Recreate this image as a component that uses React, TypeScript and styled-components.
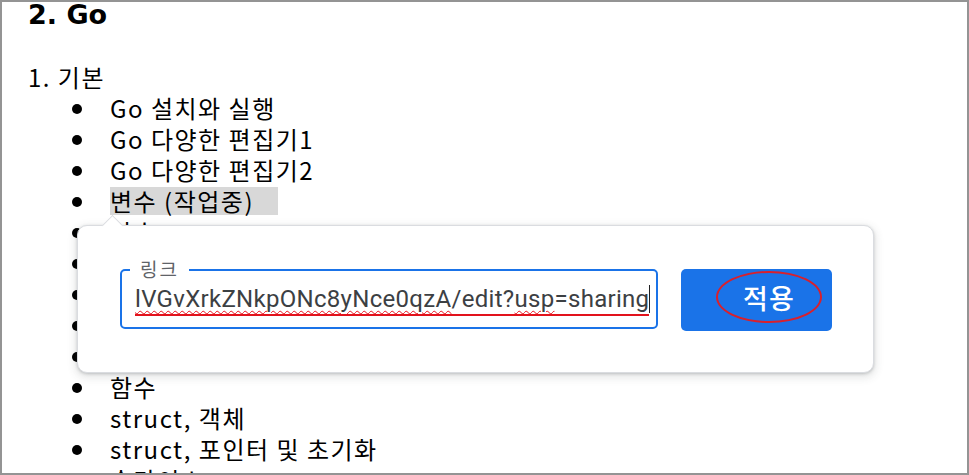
import React from 'react';
import styled, { createGlobalStyle } from 'styled-components';

const GlobalStyle = createGlobalStyle`
  html, body {
    margin: 0;
    padding: 0;
    background: #ffffff;
  }
  body {
    font-family: "Noto Sans CJK KR", sans-serif;
    color: #000000;
  }
`;

const Frame = styled.div`
  position: relative;
  box-sizing: border-box;
  width: 969px;
  height: 475px;
  overflow: hidden;
  border: 2px solid #949494;
  padding-left: 26px;
`;

const Heading = styled.h2`
  margin: -7px 0 0;
  font-family: "DejaVu Sans", "Noto Sans CJK KR", sans-serif;
  font-size: 27px;
  font-weight: 700;
  line-height: 40px;
`;

const Section = styled.div`
  margin-top: 26px;
  font-family: "Noto Sans CJK KR", sans-serif;
  font-size: 24px;
  letter-spacing: 1.5px;
  line-height: 31px;
`;

const List = styled.ul`
  list-style: none;
  margin: 0;
  padding: 0;
`;

const Item = styled.li`
  display: flex;
  align-items: center;
  height: 31px;
  font-family: "Noto Sans CJK KR", sans-serif;
  font-size: 24px;
  letter-spacing: 1.5px;
`;

const Bullet = styled.span`
  flex: none;
  width: 10px;
  height: 10px;
  border-radius: 50%;
  background: #000000;
  margin: 2px 28px 0 44px;
`;

const Marked = styled.span`
  background: #d8d8d8;
  padding-right: 24px;
  line-height: 28px;
`;

const Popup = styled.div`
  position: absolute;
  left: 75px;
  top: 223px;
  width: 797px;
  height: 148px;
  box-sizing: border-box;
  display: flex;
  align-items: center;
  gap: 23px;
  padding: 0 43px 0 42px;
  background: #ffffff;
  border: 1px solid #dadce0;
  border-radius: 10px;
  box-shadow: 0 1px 3px rgba(60, 64, 67, 0.25), 0 3px 8px 2px rgba(60, 64, 67, 0.12);

  &::before {
    content: '';
    position: absolute;
    left: 27px;
    top: -8px;
    width: 14px;
    height: 14px;
    background: #ffffff;
    border-left: 1px solid #dadce0;
    border-top: 1px solid #dadce0;
    transform: rotate(45deg);
  }
`;

const Field = styled.div`
  position: relative;
  flex: 1;
  height: 60px;
  box-sizing: border-box;
  border: 2px solid #1a73e8;
  border-radius: 5px;
  display: flex;
  align-items: center;
  padding: 0 6px 0 13px;
`;

const Label = styled.span`
  position: absolute;
  left: 8px;
  top: -14px;
  padding: 0 10px;
  background: #ffffff;
  font-family: "Noto Sans CJK KR", sans-serif;
  font-size: 19px;
  letter-spacing: 2px;
  line-height: 24px;
  color: #5f6368;
`;

const Value = styled.div`
  flex: 1;
  overflow: hidden;
  display: flex;
  justify-content: flex-end;
  white-space: nowrap;
  font-family: Roboto, sans-serif;
  font-size: 24px;
  letter-spacing: 0.3px;
  color: #3c4043;
  margin-top: 2px;
`;

const Annotated = styled.span`
  display: inline-block;
  line-height: 28px;
  padding-bottom: 1px;
  border-bottom: 2px solid #e2121c;
`;

const Misspelled = styled.span`
  text-decoration: underline wavy #e8101c;
  text-decoration-thickness: 1px;
  text-underline-offset: 3px;
`;

const Caret = styled.span`
  display: inline-block;
  width: 1px;
  height: 28px;
  background: #202124;
  vertical-align: -6px;
`;

const ApplyButton = styled.button`
  flex: none;
  width: 151px;
  height: 62px;
  border: none;
  border-radius: 5px;
  background: #1a73e8;
  color: #ffffff;
  font-family: "Noto Sans CJK KR", sans-serif;
  font-size: 27px;
  font-weight: 500;
  letter-spacing: 1px;
  display: flex;
  align-items: center;
  justify-content: center;
  padding: 0;
  margin-top: 2px;
`;

const Circled = styled.span`
  display: inline-flex;
  align-items: center;
  justify-content: center;
  flex: none;
  width: 106px;
  height: 52px;
  box-sizing: border-box;
  border: 2px solid #d9202c;
  border-radius: 50%;
  margin-top: -6px;
  margin-left: 24px;
`;

const items = [
  'Go 설치와 실행',
  'Go 다양한 편집기1',
  'Go 다양한 편집기2',
  '변수 (작업중)',
  '상수',
  '연산자',
  '조건문',
  '반복문',
  '배열',
  '함수',
  'struct, 객체',
  'struct, 포인터 및 초기화',
  '슬라이스',
];

export default function App() {
  return (
    <>
      <GlobalStyle />
      <Frame>
        <Heading>2. Go</Heading>
        <Section>1. 기본</Section>
        <List>
          {items.map((text, i) => (
            <Item key={text}>
              <Bullet />
              {i === 3 ? <Marked>{text}</Marked> : <span>{text}</span>}
            </Item>
          ))}
        </List>
        <Popup>
          <Field>
            <Label>링크</Label>
            <Value>
              <span>
                <Annotated>
                  <Misspelled>lVGvXrkZNkpONc8yNce0qzA</Misspelled>/edit?<Misspelled>usp</Misspelled>=sharing
                </Annotated>
                <Caret />
              </span>
            </Value>
          </Field>
          <ApplyButton>
            <Circled>적용</Circled>
          </ApplyButton>
        </Popup>
      </Frame>
    </>
  );
}
